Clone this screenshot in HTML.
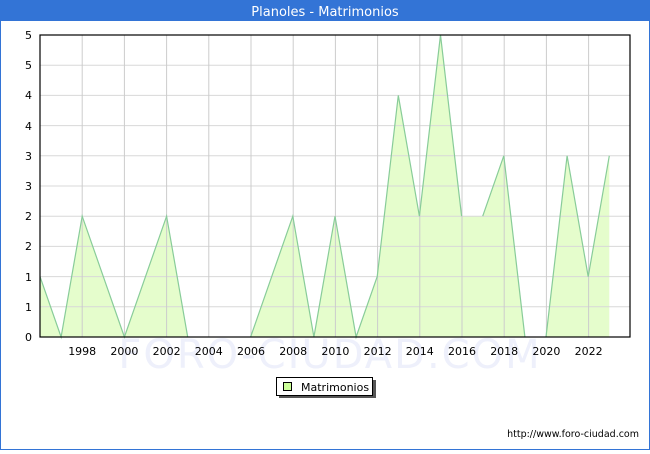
<!DOCTYPE html>
<html><head><meta charset="utf-8"><style>
body{margin:0;width:650px;height:450px;overflow:hidden;background:#fff;font-family:"DejaVu Sans","Liberation Sans",sans-serif;}
</style></head><body>
<svg width="650" height="450" xmlns="http://www.w3.org/2000/svg" font-family="DejaVu Sans, Liberation Sans, sans-serif">
<rect x="0.5" y="0.5" width="649" height="449" fill="#fff" stroke="#3374d6"/>
<rect x="0" y="0" width="650" height="21" fill="#3374d6"/>
<text x="325" y="16" fill="#fff" font-size="13" text-anchor="middle">Planoles - Matrimonios</text>
<text x="330" y="368" fill="#eef0fb" font-size="40" text-anchor="middle" letter-spacing="2">FORO-CIUDAD.COM</text>
<polygon fill="#e5fdcc" points="40,337 40,276.6 61.1,337 82.2,216.2 103.3,276.6 124.4,337 145.5,276.6 166.6,216.2 187.7,337 250.6,337 271.7,276.6 292.8,216.2 313.9,337 335,216.2 356.1,337 377.2,276.6 398.3,95.4 419.4,216.2 440.5,35 461.6,216.2 482.7,216.2 503.8,155.8 524.9,337 546,337 567.1,155.8 588.2,276.6 609.3,155.8 609.3,337"/>
<g stroke="#d8d8d8" stroke-width="1">
<line x1="40" y1="65.2" x2="630" y2="65.2"/><line x1="40" y1="95.4" x2="630" y2="95.4"/><line x1="40" y1="125.6" x2="630" y2="125.6"/><line x1="40" y1="155.8" x2="630" y2="155.8"/><line x1="40" y1="186" x2="630" y2="186"/><line x1="40" y1="216.2" x2="630" y2="216.2"/><line x1="40" y1="246.4" x2="630" y2="246.4"/><line x1="40" y1="276.6" x2="630" y2="276.6"/><line x1="40" y1="306.8" x2="630" y2="306.8"/>
</g>
<g stroke="#cccccc" stroke-width="1">
<line x1="82.2" y1="35" x2="82.2" y2="337"/><line x1="124.4" y1="35" x2="124.4" y2="337"/><line x1="166.6" y1="35" x2="166.6" y2="337"/><line x1="208.8" y1="35" x2="208.8" y2="337"/><line x1="251" y1="35" x2="251" y2="337"/><line x1="293.2" y1="35" x2="293.2" y2="337"/><line x1="335.4" y1="35" x2="335.4" y2="337"/><line x1="377.6" y1="35" x2="377.6" y2="337"/><line x1="419.8" y1="35" x2="419.8" y2="337"/><line x1="462" y1="35" x2="462" y2="337"/><line x1="504.2" y1="35" x2="504.2" y2="337"/><line x1="546.4" y1="35" x2="546.4" y2="337"/><line x1="588.6" y1="35" x2="588.6" y2="337"/>
</g>
<g fill="none" stroke="#88cc99" stroke-width="1.2">
<polyline points="40,276.6 61.1,337 82.2,216.2 103.3,276.6 124.4,337 145.5,276.6 166.6,216.2 187.7,337"/>
<polyline points="250.6,337 271.7,276.6 292.8,216.2 313.9,337 335,216.2 356.1,337 377.2,276.6 398.3,95.4 419.4,216.2 440.5,35 461.6,216.2"/>
<polyline points="482.7,216.2 503.8,155.8 524.9,337"/>
<polyline points="546,337 567.1,155.8 588.2,276.6 609.3,155.8"/>
</g>
<rect x="40" y="35" width="590" height="302" fill="none" stroke="#000" stroke-width="1.2"/>
<g font-size="11" fill="#000" text-anchor="end">
<text x="32" y="341">0</text><text x="32" y="311">1</text><text x="32" y="281">1</text><text x="32" y="250">2</text><text x="32" y="220">2</text><text x="32" y="190">3</text><text x="32" y="160">3</text><text x="32" y="130">4</text><text x="32" y="99">4</text><text x="32" y="69">5</text><text x="32" y="39">5</text>
</g>
<g font-size="11" fill="#000" text-anchor="middle">
<text x="82.2" y="355">1998</text><text x="124.4" y="355">2000</text><text x="166.6" y="355">2002</text><text x="208.8" y="355">2004</text><text x="251" y="355">2006</text><text x="293.2" y="355">2008</text><text x="335.4" y="355">2010</text><text x="377.6" y="355">2012</text><text x="419.8" y="355">2014</text><text x="462" y="355">2016</text><text x="504.2" y="355">2018</text><text x="546.4" y="355">2020</text><text x="588.6" y="355">2022</text>
</g>
<rect x="279" y="380" width="97" height="18" fill="#555"/>
<rect x="276.5" y="377.5" width="96" height="18" fill="#fff" stroke="#000"/>
<rect x="283.5" y="382.5" width="8" height="8" fill="#ccff99" stroke="#000"/>
<text x="301" y="391" font-size="11">Matrimonios</text>
<text x="639" y="437" font-size="9.5" text-anchor="end">http://www.foro-ciudad.com</text>
</svg>
</body></html>
